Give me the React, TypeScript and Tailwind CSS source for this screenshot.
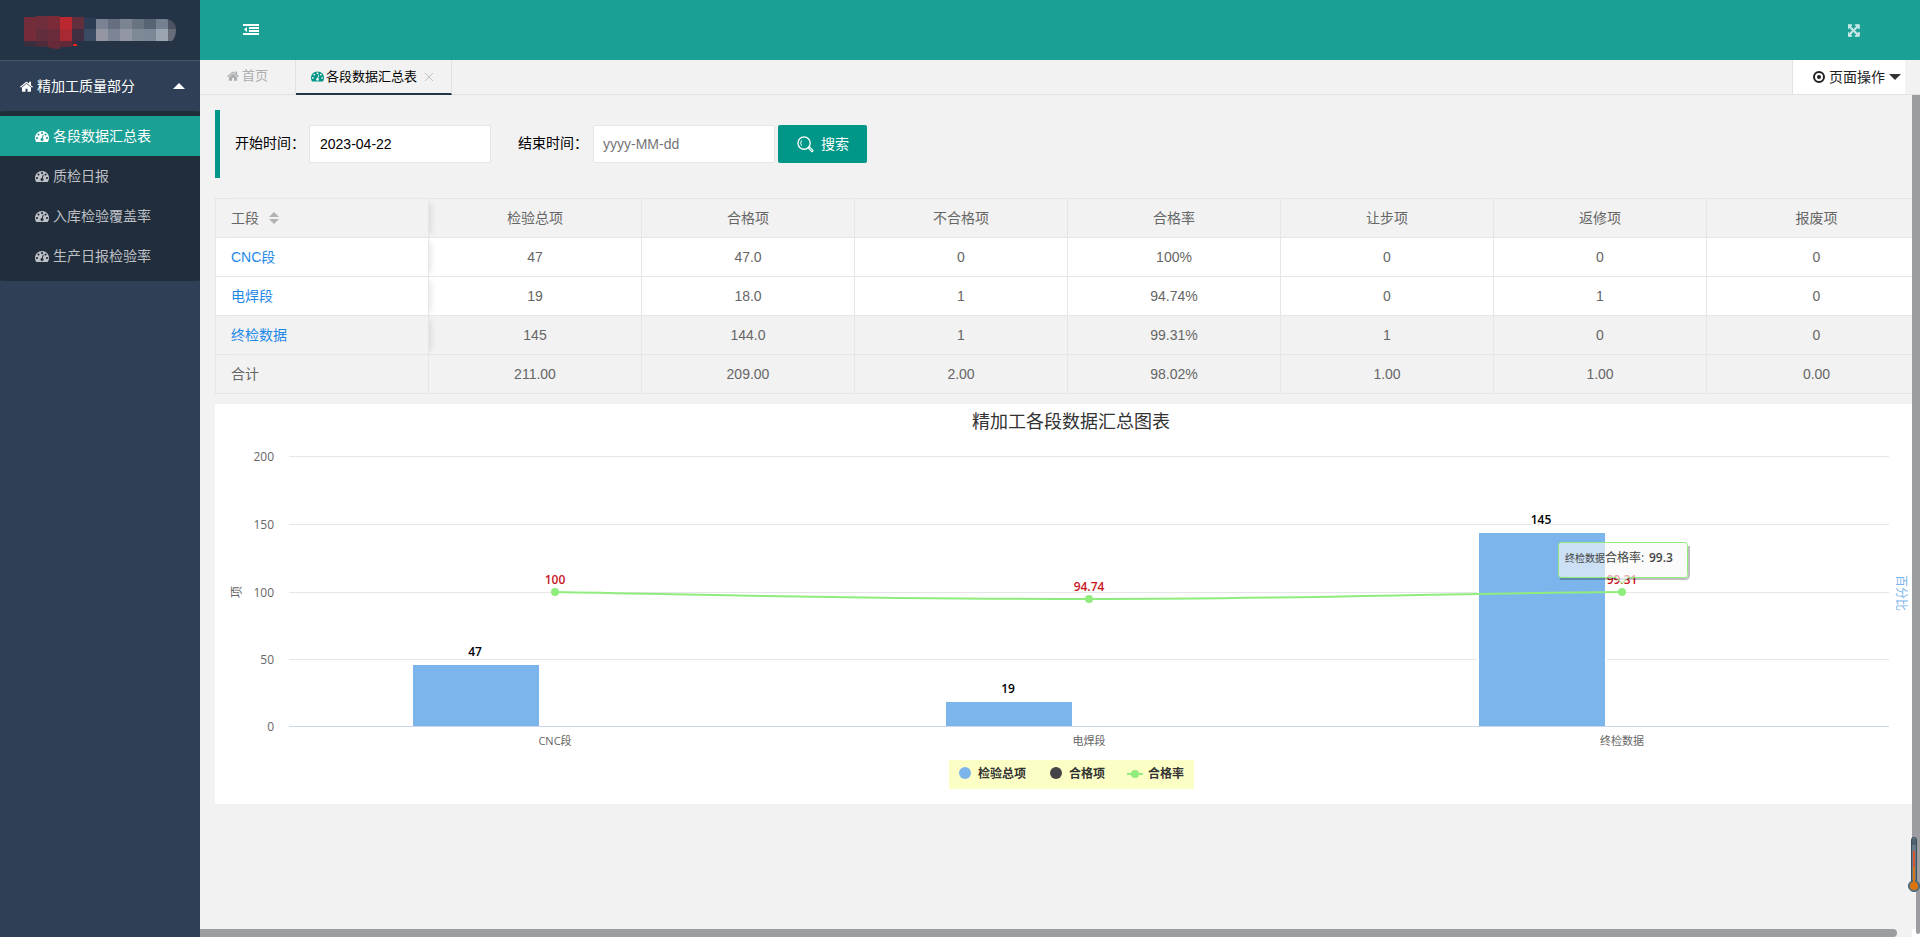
import { useState } from "react";

interface IconProps {
    className?: string;
}

interface StageRow {
    name: string;
    cells: string[];
    shaded?: boolean;
}

const COLUMNS = ["检验总项", "合格项", "不合格项", "合格率", "让步项", "返修项", "报废项"];

const ROWS: StageRow[] = [
    { name: "CNC段", cells: ["47", "47.0", "0", "100%", "0", "0", "0"] },
    { name: "电焊段", cells: ["19", "18.0", "1", "94.74%", "0", "1", "0"] },
    { name: "终检数据", cells: ["145", "144.0", "1", "99.31%", "1", "0", "0"], shaded: true }
];

const TOTALS = ["211.00", "209.00", "2.00", "98.02%", "1.00", "1.00", "0.00"];

const MENU = ["各段数据汇总表", "质检日报", "入库检验覆盖率", "生产日报检验率"];

// rows of 12px blocks: x, y, width, height, colour
const LOGO_BLOCKS: [number, number, number, number, string][] = [
    [0, 1, 12, 12, "#732d3a"], [12, 0, 12, 13, "#6e2e3b"], [24, 0, 12, 13, "#7b2a37"],
    [36, 1, 12, 12, "#bd2830"], [48, 1, 12, 12, "#632f3d"], [60, 2, 12, 11, "#2c3c53"],
    [72, 3, 12, 10, "#7b8293"], [84, 3, 12, 10, "#666f80"], [96, 3, 12, 10, "#7b8491"],
    [108, 3, 12, 10, "#687482"], [120, 3, 12, 10, "#566474"], [132, 3, 12, 10, "#747f90"],
    [144, 3, 8, 10, "#4c5463"],
    [0, 13, 12, 12, "#762b39"], [12, 13, 12, 12, "#622e3c"], [24, 13, 12, 12, "#6a2c3a"],
    [36, 13, 12, 12, "#a92933"], [48, 13, 12, 12, "#402f40"], [60, 13, 12, 12, "#3b4b63"],
    [72, 13, 12, 12, "#9496a4"], [84, 13, 12, 12, "#7b8594"], [96, 13, 12, 12, "#9396a4"],
    [108, 13, 12, 12, "#7e8a96"], [120, 13, 12, 12, "#7c8896"], [132, 13, 12, 12, "#9ba5b2"],
    [144, 13, 8, 12, "#666c78"],
    [0, 25, 12, 6, "#392f3f"], [12, 25, 12, 6, "#4e2c3b"], [24, 25, 12, 8, "#662a38"],
    [36, 25, 12, 6, "#622a38"], [48, 25, 4, 3, "#432d3d"], [49, 28, 4, 2, "#ee2024"]
];

function Logo() {
    return (
        <svg width="152" height="34" viewBox="0 0 152 34" aria-hidden="true">
            <clipPath id="logo-shape">
                <path d="M0 1 12 0H52L58 1H64L74 3H142Q152 4 152 14 152 21 148 25H60L53 30H48Q42 33 34 33 28 33 24 31L0 30Z" />
            </clipPath>
            <g clipPath="url(#logo-shape)" shapeRendering="crispEdges">
                {
                    LOGO_BLOCKS.map(([x, y, width, height, fill]) => (
                        <rect key={`${x}-${y}`} x={x} y={y} width={width} height={height} fill={fill} />
                    ))
                }
            </g>
        </svg>
    );
}

function HomeIcon({ className }: IconProps) {
    return (
        <svg viewBox="64 192 1664 1344" fill="currentColor" className={className} aria-hidden="true">
            <path d="M1472 992v480q0 26-19 45t-45 19h-384v-384h-256v384h-384q-26 0-45-19t-19-45v-480q0-1 .5-3t.5-3l575-474 575 474q1 2 1 6zm223-69l-62 74q-8 9-21 11h-3q-13 0-21-7l-692-577-692 577q-12 8-24 7-13-2-21-11l-62-74q-8-10-7-23.5t11-21.5l719-599q32-26 76-26t76 26l244 204v-195q0-14 9-23t23-9h192q14 0 23 9t9 23v408l219 182q10 8 11 21.5t-7 23.5z" />
        </svg>
    );
}

function DashboardIcon({ className }: IconProps) {
    return (
        <svg viewBox="0 256 1792 1408" fill="currentColor" className={className} aria-hidden="true">
            <path d="M384 1152q0-53-37.5-90.5t-90.5-37.5-90.5 37.5-37.5 90.5 37.5 90.5 90.5 37.5 90.5-37.5 37.5-90.5zm192-448q0-53-37.5-90.5t-90.5-37.5-90.5 37.5-37.5 90.5 37.5 90.5 90.5 37.5 90.5-37.5 37.5-90.5zm428 481l101-382q6-26-7.5-48.5t-38.5-29.5-48 6.5-30 39.5l-101 382q-60 5-107 43.5t-63 98.5q-20 77 20 146t117 89 146-20 89-117q16-60-6-117t-72-91zm660-33q0-53-37.5-90.5t-90.5-37.5-90.5 37.5-37.5 90.5 37.5 90.5 90.5 37.5 90.5-37.5 37.5-90.5zm-640-640q0-53-37.5-90.5t-90.5-37.5-90.5 37.5-37.5 90.5 37.5 90.5 90.5 37.5 90.5-37.5 37.5-90.5zm448 192q0-53-37.5-90.5t-90.5-37.5-90.5 37.5-37.5 90.5 37.5 90.5 90.5 37.5 90.5-37.5 37.5-90.5zm320 448q0 261-141 483-19 29-54 29h-1402q-35 0-54-29-141-221-141-483 0-182 71-348t191-286 286-191 348-71 348 71 286 191 191 286 71 348z" />
        </svg>
    );
}

function FullscreenIcon({ className }: IconProps) {
    return (
        <svg
            viewBox="64 64 1664 1664"
            fill="currentColor"
            stroke="currentColor"
            strokeWidth="90"
            className={className}
            aria-hidden="true"
        >
            <path d="M1283 541l-355 355 355 355 144-144q29-31 70-14 39 17 39 59v448q0 26-19 45t-45 19h-448q-42 0-59-40-17-39 14-69l144-144-355-355-355 355 144 144q31 30 14 69-17 40-59 40h-448q-26 0-45-19t-19-45v-448q0-42 40-59 39-17 69 14l144 144 355-355-355-355-144 144q-19 19-45 19-12 0-24-5-40-17-40-59v-448q0-26 19-45t45-19h448q42 0 59 40 17 39-14 69l-144 144 355 355 355-355-144-144q-31-30-14-69 17-40 59-40h448q26 0 45 19t19 45v448q0 42-39 59-13 5-25 5-26 0-45-19z" />
        </svg>
    );
}

function OutdentIcon({ className }: IconProps) {
    return (
        <svg viewBox="0 0 16 12" fill="currentColor" className={className} aria-hidden="true">
            <path d="M0 0h16v2H0zM6 3h10v2H6zM6 6h10v2H6zM0 9h16v2H0zM4 3v5L1 5.500z" />
        </svg>
    );
}

function SearchIcon({ className }: IconProps) {
    return (
        <svg viewBox="0 0 18 18" fill="none" stroke="currentColor" className={className} aria-hidden="true">
            <circle cx="7.500" cy="7.500" r="6.500" strokeWidth="1.400" />
            <path d="M4.800 4.600Q3 7.500 4.800 10.400" strokeWidth="1" />
            <path d="M12 12.500l1.200-1 3.600 3.700q.4 1-1 1.500L12.400 13z" strokeWidth="1.200" />
        </svg>
    );
}

function Thermometer() {
    return (
        <svg width="12" height="56" viewBox="0 0 12 56" aria-hidden="true">
            <rect x="3.500" y="0.500" width="5" height="46" rx="2" fill="#667a89" stroke="#3c4e5a" />
            <rect x="4" y="2" width="4" height="6" fill="#4f616e" />
            <circle cx="6" cy="49" r="5.500" fill="#5f7583" stroke="#44606f" />
            <rect x="5" y="14" width="2" height="32" fill="#d8552f" />
            <rect x="5" y="30" width="2" height="16" fill="#d97410" />
            <circle cx="6" cy="49" r="4" fill="#db750c" />
        </svg>
    );
}

function Sidebar() {
    const [active, setActive] = useState(MENU[0]);

    return (
        <aside className="w-[200px] shrink-0 bg-[#2f4056] text-sm text-white">
            <div className="h-[61px] border-b border-[#475566] bg-[#243346] pt-4 pl-6">
                <Logo />
            </div>
            <button className="flex h-[50px] w-full items-center pr-[15px] pl-5">
                <HomeIcon className="h-[11px] w-[13px]" />
                <span className="ml-1">精加工质量部分</span>
                <span className="ml-auto border-x-6 border-b-6 border-x-transparent border-b-white" />
            </button>
            <nav className="rounded-xs bg-[#222d3c] py-[5px]">
                {
                    MENU.map(item => (
                        <a
                            key={item}
                            href="#"
                            onClick={() => setActive(item)}
                            className={
                                item === active
                                    ? "flex h-10 items-center bg-[#1aa094] pl-[35px] text-white"
                                    : "flex h-10 items-center pl-[35px] text-[#bdc0c5]"
                            }
                        >
                            <DashboardIcon className="h-[11px] w-[14px]" />
                            <span className="ml-1">{item}</span>
                        </a>
                    ))
                }
            </nav>
        </aside>
    );
}

function TabBar() {
    return (
        <div className="flex h-[35px] shrink-0 border-b border-[#e2e2e2] text-[13px]">
            <a href="#" className="flex w-24 items-center border-r border-[#e2e2e2] pb-0.5 pl-[27px] text-[#acafb1]">
                <HomeIcon className="h-[10px] w-3" />
                <span className="ml-[3px]">首页</span>
            </a>
            <div className="-mb-px flex w-[156px] items-center border-r border-b-2 border-r-[#e2e2e2] border-b-[#243346] pl-[15px] text-black">
                <DashboardIcon className="h-[11px] w-[13px] text-[#009688]" />
                <span className="ml-0.5">各段数据汇总表</span>
                <button aria-label="关闭" className="ml-2 text-[#c2c2c2]">
                    <svg viewBox="0 0 8 8" stroke="currentColor" className="size-2" aria-hidden="true">
                        <path d="M0 0l8 8M8 0L0 8" />
                    </svg>
                </button>
            </div>
            <button className="mr-[15px] ml-auto flex w-[113px] items-center border-l border-[#e2e2e2] bg-white pl-5 text-sm text-[#222]">
                <svg viewBox="0 0 12 12" className="size-3" aria-hidden="true">
                    <circle cx="6" cy="6" r="5" fill="none" stroke="currentColor" strokeWidth="2" />
                    <circle cx="6" cy="6" r="2" fill="currentColor" />
                </svg>
                <span className="ml-1">页面操作</span>
                <span className="ml-1 border-x-6 border-t-6 border-x-transparent border-t-[#333]" />
            </button>
        </div>
    );
}

function SearchForm() {
    const [start, setStart] = useState("2023-04-22");
    const [end, setEnd] = useState("");

    return (
        <form
            onSubmit={event => event.preventDefault()}
            className="flex h-[68px] items-center border-l-5 border-[#009688] pl-[15px] text-sm text-black"
        >
            <label htmlFor="start" className="w-[74px] pb-0.5">开始时间：</label>
            <input
                id="start"
                value={start}
                onChange={event => setStart(event.target.value)}
                className="h-[38px] w-[182px] rounded-xs border border-[#e6e6e6] bg-white pl-2.5 outline-none"
            />
            <label htmlFor="end" className="ml-[27px] w-[75px] pb-0.5">结束时间：</label>
            <input
                id="end"
                value={end}
                placeholder="yyyy-MM-dd"
                onChange={event => setEnd(event.target.value)}
                className="h-[38px] w-[182px] rounded-xs border border-[#e6e6e6] bg-white pl-[9px] outline-none placeholder:text-[#757575]"
            />
            <button type="submit" className="ml-[3px] flex h-[38px] w-[89px] items-center rounded-xs bg-[#009688] pl-[19px] text-white">
                <SearchIcon className="size-[17px]" />
                <span className="ml-[7px]">搜索</span>
            </button>
        </form>
    );
}

function StageTable() {
    return (
        <table className="w-full table-fixed border-collapse text-sm text-[#666]">
            <colgroup>
                {COLUMNS.map(column => <col key={column} className="w-[213px]" />)}
                <col />
            </colgroup>
            <thead>
                <tr className="h-[39px]">
                    <th className="border border-[#e6e6e6] pl-[15px] text-left font-normal shadow-[6px_0_6px_-4px_rgba(0,0,0,0.1)]">
                        <button className="flex items-center">
                            工段
                            <span className="ml-2.5 flex flex-col gap-0.5">
                                <span className="border-x-5 border-b-5 border-x-transparent border-b-[#b2b2b2]" />
                                <span className="border-x-5 border-t-5 border-x-transparent border-t-[#b2b2b2]" />
                            </span>
                        </button>
                    </th>
                    {
                        COLUMNS.map(column => (
                            <th key={column} className="border border-[#e6e6e6] font-normal">{column}</th>
                        ))
                    }
                </tr>
            </thead>
            <tbody>
                {
                    ROWS.map(row => (
                        <tr key={row.name} className={row.shaded ? "h-[39px] bg-[#f2f2f2]" : "h-[39px] bg-white"}>
                            <td className="border border-[#e6e6e6] pl-[15px] shadow-[6px_0_6px_-4px_rgba(0,0,0,0.1)]">
                                <a href="#" className="text-[#1e88e8]">{row.name}</a>
                            </td>
                            {
                                row.cells.map((cell, i) => (
                                    <td key={i} className="border border-[#e6e6e6] text-center">{cell}</td>
                                ))
                            }
                        </tr>
                    ))
                }
            </tbody>
            <tfoot>
                <tr className="h-[39px]">
                    <td className="border border-[#e6e6e6] pl-[15px]">合计</td>
                    {
                        TOTALS.map((cell, i) => (
                            <td key={i} className="border border-[#e6e6e6] text-center">{cell}</td>
                        ))
                    }
                </tr>
            </tfoot>
        </table>
    );
}

const GRID = [
    { label: "200", y: 52 },
    { label: "150", y: 120 },
    { label: "100", y: 188 },
    { label: "50", y: 255 }
];

const BARS = [
    { label: "47", x: 198, top: 261 },
    { label: "19", x: 731, top: 298 },
    { label: "145", x: 1264, top: 129 }
];

const POINTS = [
    { name: "CNC段", label: "100", x: 340, y: 188 },
    { name: "电焊段", label: "94.74", x: 874, y: 195 },
    { name: "终检数据", label: "99.31", x: 1407, y: 188 }
];

const TOOLTIP = "M1346.500 138.500h123a3 3 0 0 1 3 3v29a3 3 0 0 1-3 3H1413l-6 6-6-6h-54.500a3 3 0 0 1-3-3v-29a3 3 0 0 1 3-3z";

function SummaryChart() {
    return (
        <svg
            viewBox="0 0 1712 400"
            className="mt-2.5 block w-full bg-white font-['Open_Sans','Noto_Sans_CJK_SC',sans-serif]"
            role="img"
            aria-label="精加工各段数据汇总图表"
        >
            <text x="856" y="24" textAnchor="middle" className="fill-[#333] text-lg">精加工各段数据汇总图表</text>

            {
                GRID.map(line => (
                    <g key={line.label}>
                        <rect x="74" y={line.y} width="1600" height="1" fill="#e6e6e6" />
                        <text x="59" y={line.y + 5} textAnchor="end" className="fill-[#666] text-xs">{line.label}</text>
                    </g>
                ))
            }
            <text x="59" y="327" textAnchor="end" className="fill-[#666] text-xs">0</text>
            <text transform="translate(26 188) rotate(-90)" textAnchor="middle" className="fill-[#666] text-xs">项</text>
            <text transform="translate(1682 189) rotate(90)" textAnchor="middle" className="fill-[#7cb5ec] text-xs">百分比</text>

            {
                BARS.map(bar => (
                    <g key={bar.label}>
                        <rect x={bar.x - 2} y={bar.top - 1} width="130" height={323 - bar.top} fill="#fff" />
                        <rect x={bar.x} y={bar.top} width="126" height={322 - bar.top} fill="#7cb5ec" />
                        <text
                            x={bar.x + 62}
                            y={bar.top - 9}
                            textAnchor="middle"
                            className="fill-black stroke-white stroke-2 text-xs font-semibold [paint-order:stroke]"
                        >
                            {bar.label}
                        </text>
                    </g>
                ))
            }
            <rect x="74" y="322" width="1600" height="1" fill="#ccd6eb" />

            <path d="M340 188C554 192 660 195 874 195C1088 195 1194 190 1407 188" fill="none" stroke="#90ed7d" strokeWidth="2" />
            {
                POINTS.map(point => (
                    <g key={point.name}>
                        <circle cx={point.x} cy={point.y} r="4" fill="#90ed7d" />
                        <text
                            x={point.x}
                            y={point.y - 8}
                            textAnchor="middle"
                            className="fill-[#c9151e] stroke-white stroke-2 text-xs font-semibold [paint-order:stroke]"
                        >
                            {point.label}
                        </text>
                        <text x={point.x} y="341" textAnchor="middle" className="fill-[#666] text-[11px]">{point.name}</text>
                    </g>
                ))
            }

            <path d="M1345 175h125q4 0 4-4v-29" fill="none" stroke="#000" strokeOpacity="0.25" strokeWidth="2" />
            <path d={TOOLTIP} fill="#f9f9f9" fillOpacity="0.63" stroke="#90ed7d" />
            <text x="1350" y="158" className="fill-[#444] text-[10px]">
                终检数据<tspan className="text-xs">合格率: </tspan>
            </text>
            <text x="1434" y="158" className="fill-[#444] text-xs font-semibold">99.3</text>

            <rect x="734" y="356" width="245" height="29" fill="#fcffc5" />
            <circle cx="750" cy="369" r="6" fill="#7cb5ec" />
            <circle cx="841" cy="369" r="6" fill="#434348" />
            <rect x="912" y="369" width="16" height="2" fill="#90ed7d" />
            <circle cx="920" cy="370" r="4" fill="#90ed7d" />
            <g className="fill-[#333] text-xs font-bold">
                <text x="763" y="374">检验总项</text>
                <text x="854" y="374">合格项</text>
                <text x="933" y="374">合格率</text>
            </g>
        </svg>
    );
}

export default function App() {
    return (
        <div className="flex h-screen overflow-hidden bg-[#f2f2f2] font-['Liberation_Sans','Noto_Sans_CJK_SC',sans-serif]">
            <Sidebar />
            <div className="flex min-w-0 flex-1 flex-col">
                <header className="flex h-[60px] shrink-0 items-center justify-between bg-[#1aa094] pr-[59px] pl-[43px] text-white">
                    <button aria-label="收起菜单">
                        <OutdentIcon className="h-3 w-4" />
                    </button>
                    <button aria-label="全屏" className="text-[#c6e7e4]">
                        <FullscreenIcon className="size-[13px]" />
                    </button>
                </header>
                <TabBar />
                <div className="relative flex min-h-0 flex-1">
                    <main className="min-w-0 flex-1 overflow-hidden pt-[15px] pl-[15px]">
                        <SearchForm />
                        {/* the report runs under the scrollbar on the right */}
                        <div className="mt-5 -mr-[15px]">
                            <StageTable />
                            <SummaryChart />
                        </div>
                    </main>
                    <div className="flex w-2 flex-col items-end">
                        <div className="w-2 flex-1 bg-[#9c9da1]" />
                        <div className="h-[46px] w-1 bg-[#9c9da1]" />
                    </div>
                    <div className="absolute right-0 bottom-9">
                        <Thermometer />
                    </div>
                </div>
                <div className="flex h-2 shrink-0">
                    <div className="mr-[15px] flex-1 rounded-r-full bg-[#9c9da1]" />
                    <div className="flex w-2 justify-end bg-white">
                        <div className="h-[5px] w-1 rounded-b-full bg-[#9c9da1]" />
                    </div>
                </div>
            </div>
        </div>
    );
}
